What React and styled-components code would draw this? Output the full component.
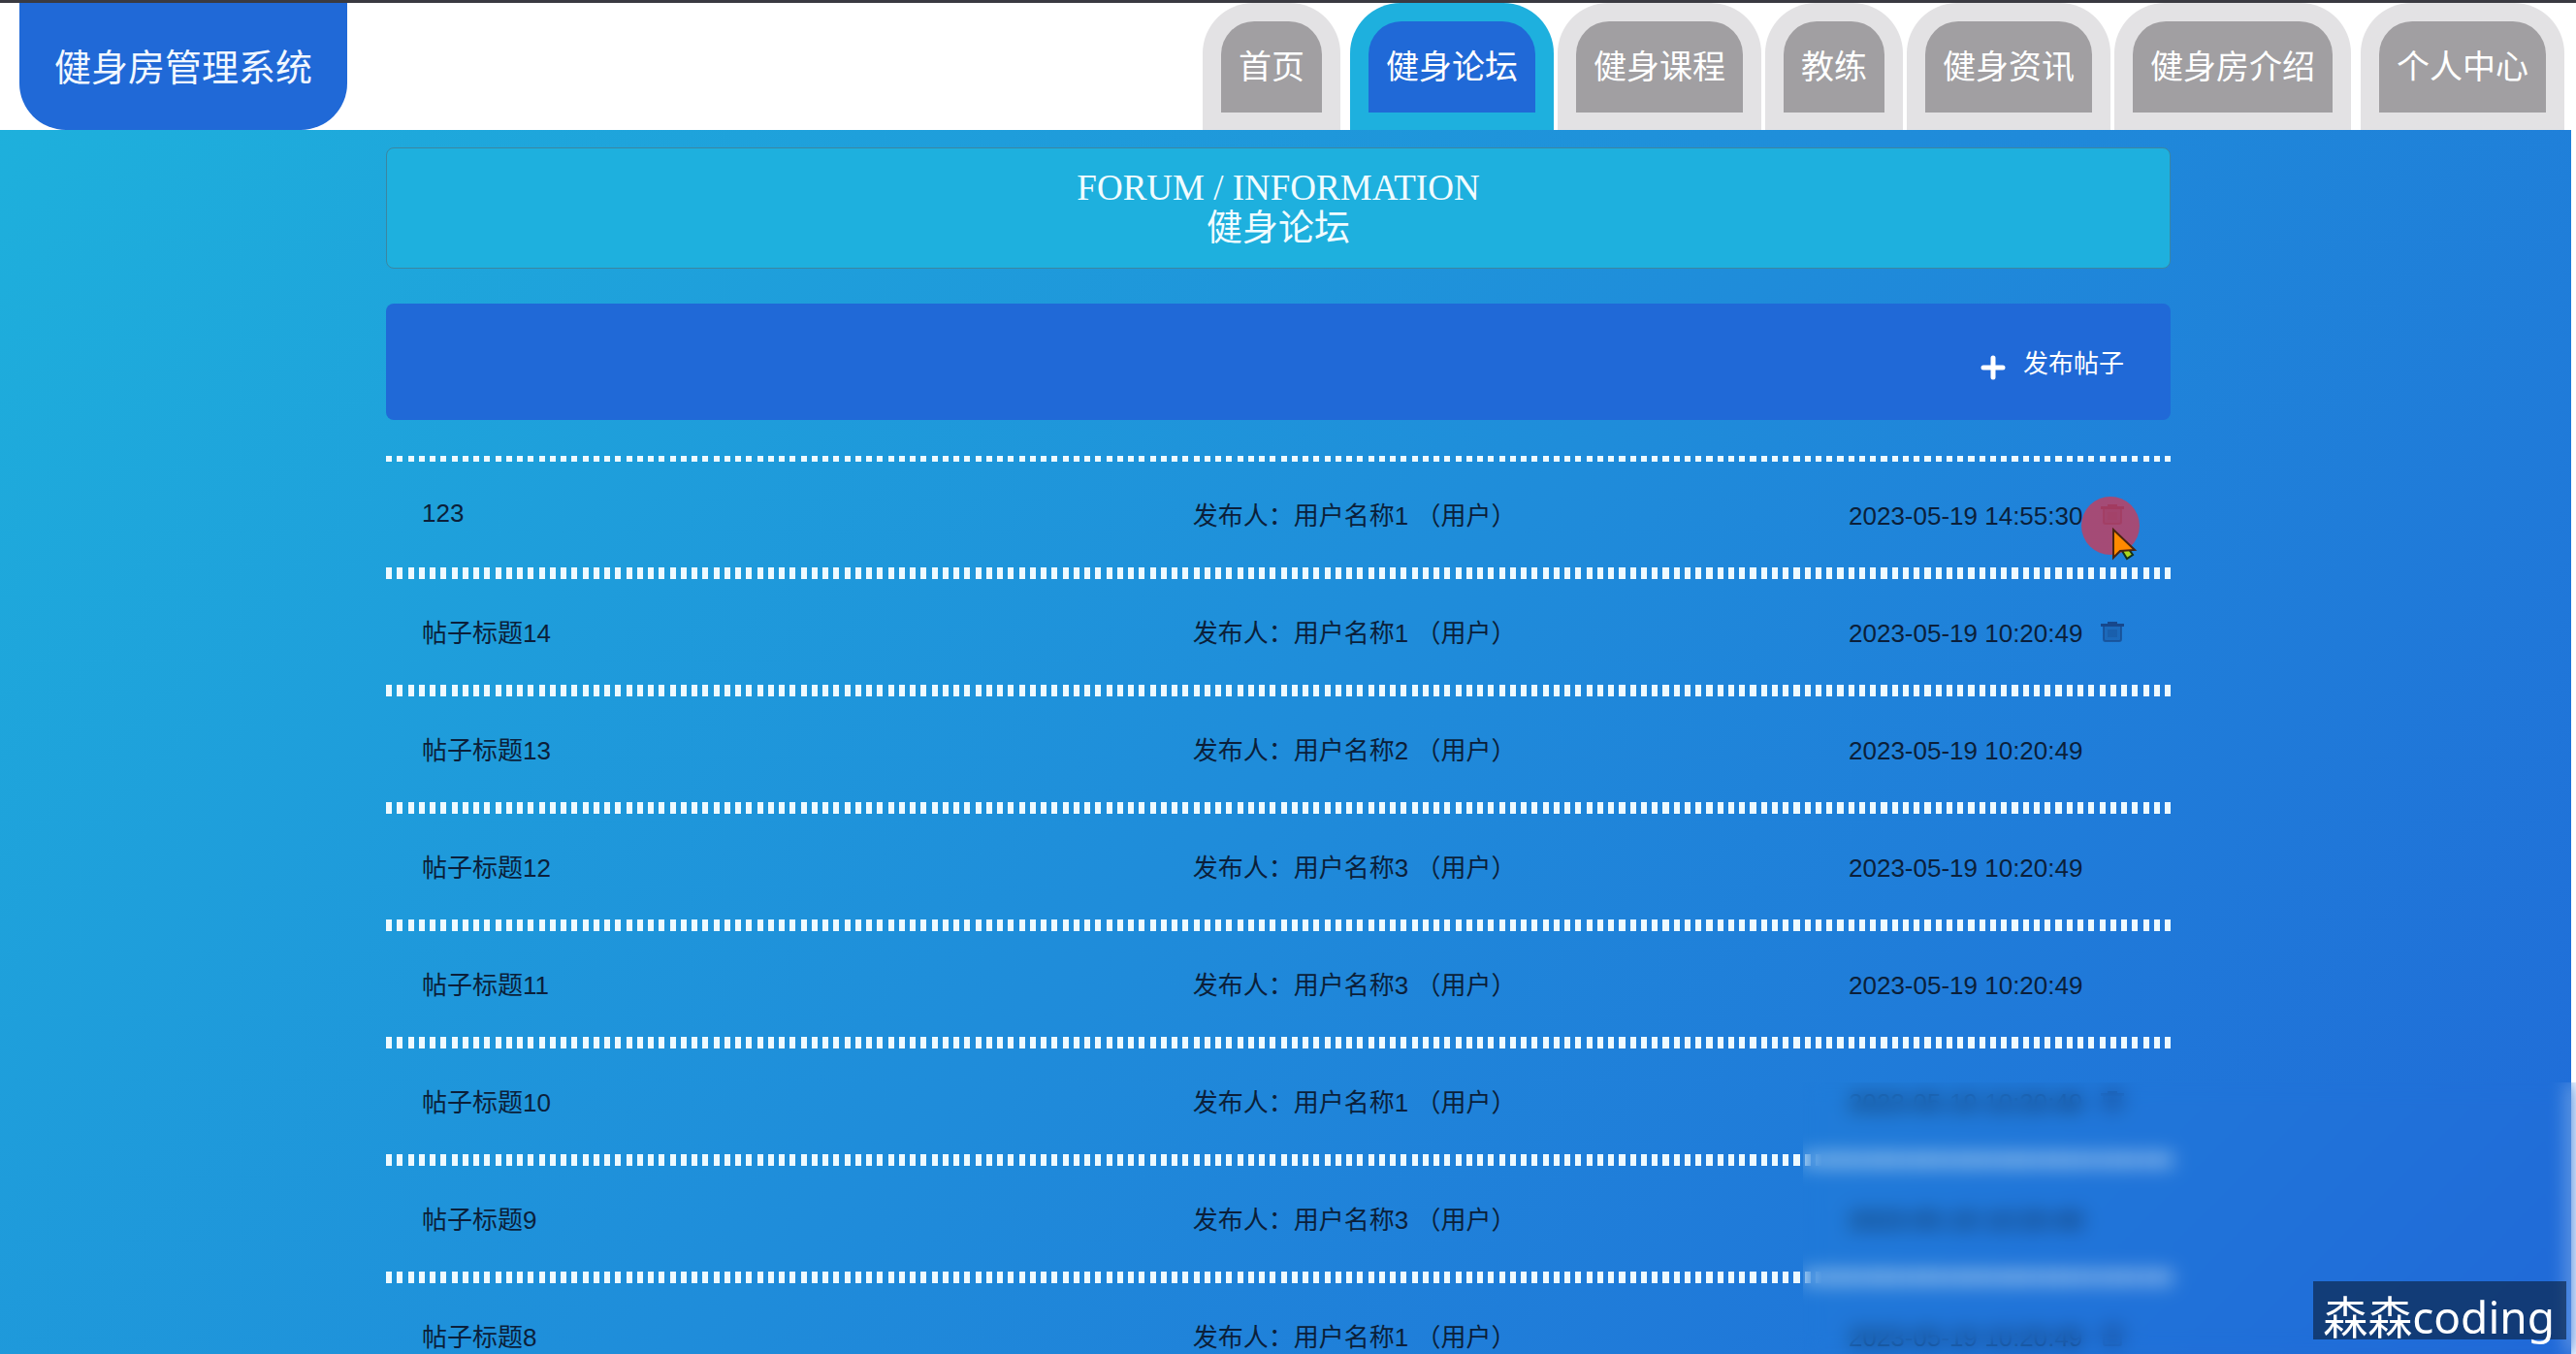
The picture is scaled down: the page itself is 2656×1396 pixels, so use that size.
import React from 'react';
import styled, { createGlobalStyle, css } from 'styled-components';

const GlobalStyle = createGlobalStyle`
  * { box-sizing: border-box; }
  body {
    margin: 0;
    font-family: "Liberation Sans", "Noto Sans CJK SC", sans-serif;
    font-size: 26px;
    color: #0b1f3a;
    background: #fff;
  }
  a { color: inherit; text-decoration: none; }
`;

const Screen = styled.div`
  position: relative;
  height: 100vh;
  display: flex;
  flex-direction: column;
  overflow: hidden;
`;

const Header = styled.header`
  display: flex;
  flex: none;
  justify-content: space-between;
  height: 134px;
  padding: 0 12px 0 20px;
  border-top: 3px solid #3a3a41;
  background: #fff;
`;

const Brand = styled.a`
  display: flex;
  align-items: center;
  padding: 0 36px 4px;
  border-radius: 0 0 48px 48px;
  background: #2069d7;
  color: #f2f8ff;
  font-size: 38px;
`;

const Nav = styled.nav`
  display: flex;
  gap: 10px;
`;

const TabGroup = styled.div`
  display: flex;
  gap: 4px;
`;

const Tab = styled.a`
  display: flex;
  padding: 19px 19px 18px;
  border-radius: 52px 52px 0 0;
  background: ${(p) => (p.$active ? '#1eb0de' : '#e3e2e4')};
`;

const TabLabel = styled.span`
  display: flex;
  align-items: center;
  padding: 0 18px 6px;
  border-radius: 34px 34px 0 0;
  background: ${(p) => (p.$active ? '#2069d7' : '#a19fa2')};
  color: #fff;
  font-size: 34px;
  white-space: nowrap;
`;

const Page = styled.main`
  flex: 1;
  min-height: 0;
  margin-right: 5px;
  padding: 18px 15px 0 0;
  overflow: hidden;
  background: linear-gradient(135deg, #1eb0dc, #2069d8);
`;

const Content = styled.div`
  width: 90%;
  max-width: 1840px;
  margin: 0 auto;
`;

const Banner = styled.h1`
  display: flex;
  flex-direction: column;
  align-items: center;
  height: 125px;
  margin: 0 0 36px;
  padding-top: 20px;
  border: 1px solid #3c86a0;
  border-radius: 8px;
  background: #1eb0de;
  color: #f0fcff;
  font: 400 37px/42px "Liberation Serif", "Noto Sans CJK SC", serif;
`;

const Toolbar = styled.div`
  display: flex;
  align-items: center;
  justify-content: flex-end;
  height: 120px;
  margin-bottom: 37px;
  padding: 4px 48px 0 0;
  border-radius: 8px;
  background: #2069d7;
`;

const PostButton = styled.button`
  display: flex;
  align-items: flex-end;
  gap: 18px;
  padding: 0;
  border: 0;
  background: none;
  color: #fff;
  font: inherit;
  line-height: 34px;
`;

const PostList = styled.ul`
  margin: 0;
  padding: 0;
  list-style: none;
`;

const dots = css`
  repeating-linear-gradient(90deg, #eefaff 0 0.33%, transparent 0.33% 0.6115%)
`;

const PostRow = styled.li`
  display: grid;
  grid-template-columns: 45fr 55fr;
  align-items: center;
  height: 121px;
  padding: 0 37px 2px;
  background: ${dots} top / 100% 6px no-repeat, ${dots} bottom / 100% 6px no-repeat;
`;

const PostTitle = styled.a`
  justify-self: start;
`;

const PostMeta = styled.div`
  display: grid;
  grid-template-columns: 1fr 295px;
  align-items: baseline;
`;

const PostTime = styled.div`
  display: flex;
  align-items: baseline;
  gap: 19px;
`;

const DeleteButton = styled.button`
  display: flex;
  padding: 0;
  border: 0;
  background: none;
  color: #17488c;
`;

const BlurPanel = styled.div`
  position: absolute;
  right: 0;
  bottom: 0;
  width: 797px;
  height: 280px;
  backdrop-filter: blur(10px);
`;

const Watermark = styled.div`
  position: absolute;
  right: 10px;
  bottom: 15px;
  height: 60px;
  padding: 0 12px 0 10px;
  background: rgba(10, 30, 60, 0.62);
  color: #fff;
  font: 400 46px/72px "Noto Sans", "Noto Sans CJK SC", sans-serif;
`;

const Pointer = styled.svg`
  position: absolute;
  left: 2145px;
  top: 511px;
`;

const PlusIcon = () => (
  <svg width="26" height="26" viewBox="0 0 26 26" fill="none" stroke="currentColor" strokeWidth="5" strokeLinecap="round" aria-hidden="true">
    <path d="M13 3v20M3 13h20" />
  </svg>
);

const TrashIcon = () => (
  <svg width="24" height="22" viewBox="0 0 24 22" aria-hidden="true">
    <path d="M0 3h7V1h10v2h7v3H0z" fill="currentColor" />
    <path d="M3 6h18v13q0 2-2 2H5q-2 0-2-2z" fill="currentColor" opacity=".4" />
    <path d="M7 9h10v8H7z" fill="currentColor" opacity=".3" />
    <path d="M3 6v13q0 2 2 2h14q2 0 2-2V6" fill="none" stroke="currentColor" strokeWidth="2" opacity=".7" />
  </svg>
);

const tabGroups = [
  ['首页'],
  ['健身论坛', '健身课程', '教练', '健身资讯', '健身房介绍'],
  ['个人中心'],
];

const posts = [
  { title: '123', author: '用户名称1', time: '2023-05-19 14:55:30', own: true },
  { title: '帖子标题14', author: '用户名称1', time: '2023-05-19 10:20:49', own: true },
  { title: '帖子标题13', author: '用户名称2', time: '2023-05-19 10:20:49' },
  { title: '帖子标题12', author: '用户名称3', time: '2023-05-19 10:20:49' },
  { title: '帖子标题11', author: '用户名称3', time: '2023-05-19 10:20:49' },
  { title: '帖子标题10', author: '用户名称1', time: '2023-05-19 10:20:49', own: true },
  { title: '帖子标题9', author: '用户名称3', time: '2023-05-19 10:20:49' },
  { title: '帖子标题8', author: '用户名称1', time: '2023-05-19 10:20:49', own: true },
];

export default function App() {
  return (
    <Screen>
      <GlobalStyle />
      <Header>
        <Brand href="#">健身房管理系统</Brand>
        <Nav>
          {tabGroups.map((group) => (
            <TabGroup key={group[0]}>
              {group.map((name) => (
                <Tab key={name} href="#" $active={name === '健身论坛'}>
                  <TabLabel $active={name === '健身论坛'}>{name}</TabLabel>
                </Tab>
              ))}
            </TabGroup>
          ))}
        </Nav>
      </Header>
      <Page>
        <Content>
          <Banner>
            <span>FORUM / INFORMATION</span>
            <span>健身论坛</span>
          </Banner>
          <Toolbar>
            <PostButton type="button">
              <PlusIcon />
              发布帖子
            </PostButton>
          </Toolbar>
          <PostList>
            {posts.map((post) => (
              <PostRow key={post.title}>
                <PostTitle href="#">{post.title}</PostTitle>
                <PostMeta>
                  <span>发布人：{post.author} （用户）</span>
                  <PostTime>
                    <time>{post.time}</time>
                    {post.own && (
                      <DeleteButton type="button" aria-label="删除">
                        <TrashIcon />
                      </DeleteButton>
                    )}
                  </PostTime>
                </PostMeta>
              </PostRow>
            ))}
          </PostList>
        </Content>
      </Page>
      <BlurPanel />
      <Watermark>森森coding</Watermark>
      <Pointer width="64" height="72" viewBox="0 0 64 72" aria-hidden="true">
        <circle cx="31" cy="31" r="30" fill="#d8364f" opacity=".72" />
        <path d="M43 57l5 8 6-4-5-7z" fill="#a8d820" stroke="#143018" strokeWidth="2" />
        <path d="M34 35v29l7-7 15-1z" fill="#ff8a00" stroke="#4a2410" strokeWidth="2" />
      </Pointer>
    </Screen>
  );
}
